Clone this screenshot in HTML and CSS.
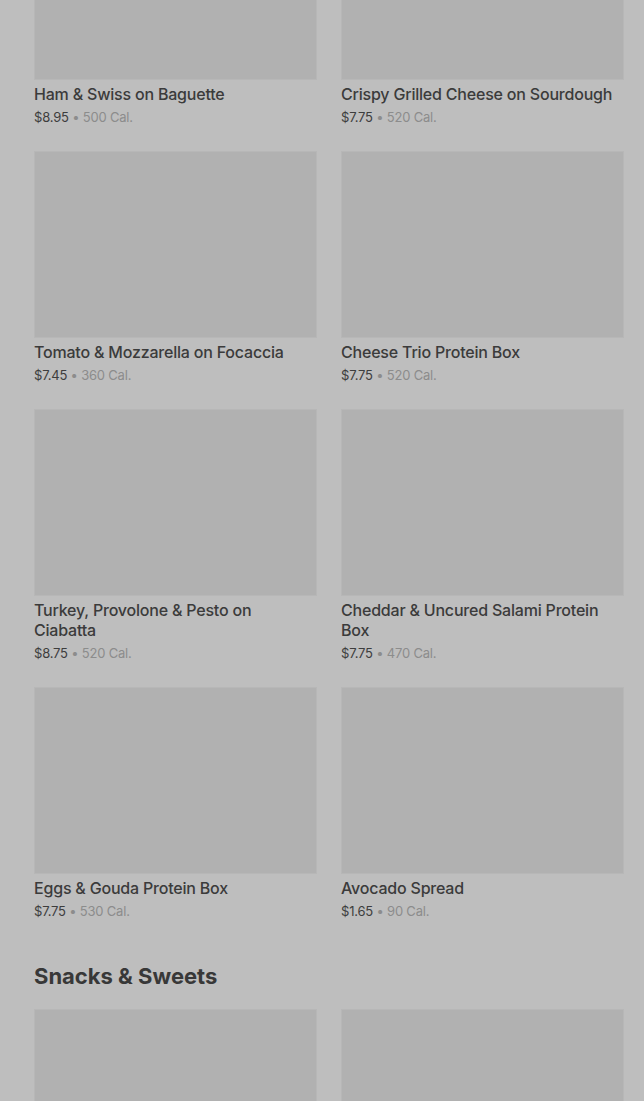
FILE: index.html
```html
<!DOCTYPE html>
<html lang="en">
<head>
  <meta charset="UTF-8">
  <title>Menu</title>
  <link rel="stylesheet" href="styles.css">
</head>
<body>

<div class="menu">
  <div class="grid first">
    <div class="item">
      <div class="thumb"></div>
      <div class="name">Ham &amp; Swiss on Baguette</div>
      <div class="meta"><span class="price">$8.95</span> • <span class="cal">500 Cal.</span></div>
    </div>
    <div class="item">
      <div class="thumb"></div>
      <div class="name">Crispy Grilled Cheese on Sourdough</div>
      <div class="meta"><span class="price">$7.75</span> • <span class="cal">520 Cal.</span></div>
    </div>
    <div class="item">
      <div class="thumb"></div>
      <div class="name">Tomato &amp; Mozzarella on Focaccia</div>
      <div class="meta"><span class="price">$7.45</span> • <span class="cal">360 Cal.</span></div>
    </div>
    <div class="item">
      <div class="thumb"></div>
      <div class="name">Cheese Trio Protein Box</div>
      <div class="meta"><span class="price">$7.75</span> • <span class="cal">520 Cal.</span></div>
    </div>
    <div class="item">
      <div class="thumb"></div>
      <div class="name">Turkey, Provolone &amp; Pesto on Ciabatta</div>
      <div class="meta"><span class="price">$8.75</span> • <span class="cal">520 Cal.</span></div>
    </div>
    <div class="item">
      <div class="thumb"></div>
      <div class="name">Cheddar &amp; Uncured Salami Protein Box</div>
      <div class="meta"><span class="price">$7.75</span> • <span class="cal">470 Cal.</span></div>
    </div>
    <div class="item">
      <div class="thumb"></div>
      <div class="name">Eggs &amp; Gouda Protein Box</div>
      <div class="meta"><span class="price">$7.75</span> • <span class="cal">530 Cal.</span></div>
    </div>
    <div class="item">
      <div class="thumb"></div>
      <div class="name">Avocado Spread</div>
      <div class="meta"><span class="price">$1.65</span> • <span class="cal">90 Cal.</span></div>
    </div>
  </div>

  <h2 class="section-title">Snacks &amp; Sweets</h2>
  <div class="grid">
    <div class="item">
      <div class="thumb"></div>
    </div>
    <div class="item">
      <div class="thumb"></div>
    </div>
  </div>
</div>

</body>
</html>
```

FILE: styles.css
```css
body {
  margin: 0;
  background-color: #bebebe;
  font-family: Inter, "Noto Sans", sans-serif;
  color: #3b3b3b;
  overflow: hidden;
}

.menu {
  padding: 0 20px 0 34px;
}

.grid {
  display: grid;
  grid-template-columns: 1fr 1fr;
  column-gap: 24px;
  row-gap: 25px;
}

.grid.first {
  margin-top: -107px;
}

.thumb {
  height: 187px;
  background-color: #b1b1b1;
  border: 1px solid #b7b7b7;
  box-sizing: border-box;
}

.name {
  margin-top: 4px;
  font-size: 16px;
  line-height: 20px;
  font-weight: 500;
  letter-spacing: -0.2px;
  color: #3b3b3b;
}

.meta {
  margin-top: 4px;
  font-size: 13px;
  line-height: 18px;
  letter-spacing: -0.2px;
  color: #8c8c8c;
}

.price {
  color: #3d3d3d;
}

.section-title {
  margin: 41px 0 18px;
  font-size: 22px;
  line-height: 30px;
  font-weight: 700;
  letter-spacing: 0;
  color: #383838;
}
```
